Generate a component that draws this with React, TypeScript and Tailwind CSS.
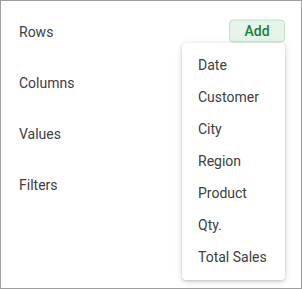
const fields = ["Date", "Customer", "City", "Region", "Product", "Qty.", "Total Sales"];

export default function App() {
  return (
    <div
      className="relative w-[302px] h-[289px] bg-white border border-[#9e9e9e] overflow-hidden"
      style={{ fontFamily: "Roboto, 'Liberation Sans', sans-serif" }}
    >
      <div className="flex flex-col gap-[27px] pt-[19px] pl-[18px] pr-[16px] text-[14px] text-[#3c4043]">
        <div className="flex h-[24px] items-center justify-between">
          <span>Rows</span>
          <button className="-translate-y-[1.5px] h-[23px] w-[56px] rounded-[4px] border border-[#b9e2c5] bg-[#e6f4ea] text-[14px] font-medium text-[#188038] leading-none">
            Add
          </button>
        </div>
        <div className="flex h-[24px] items-center">Columns</div>
        <div className="flex h-[24px] items-center">Values</div>
        <div className="flex h-[24px] items-center">Filters</div>
      </div>

      <div className="absolute left-[181px] top-[42px] w-[103px] h-[237px] rounded-[4px] bg-white pt-[6px] pb-[7px] shadow-[0_1px_3px_rgba(0,0,0,0.18),0_2px_8px_rgba(0,0,0,0.12)]">
        {fields.map((f) => (
          <div key={f} className="flex h-[32px] items-center pl-[16px] text-[14px] text-[#3c4043]">
            {f}
          </div>
        ))}
      </div>
    </div>
  );
}
